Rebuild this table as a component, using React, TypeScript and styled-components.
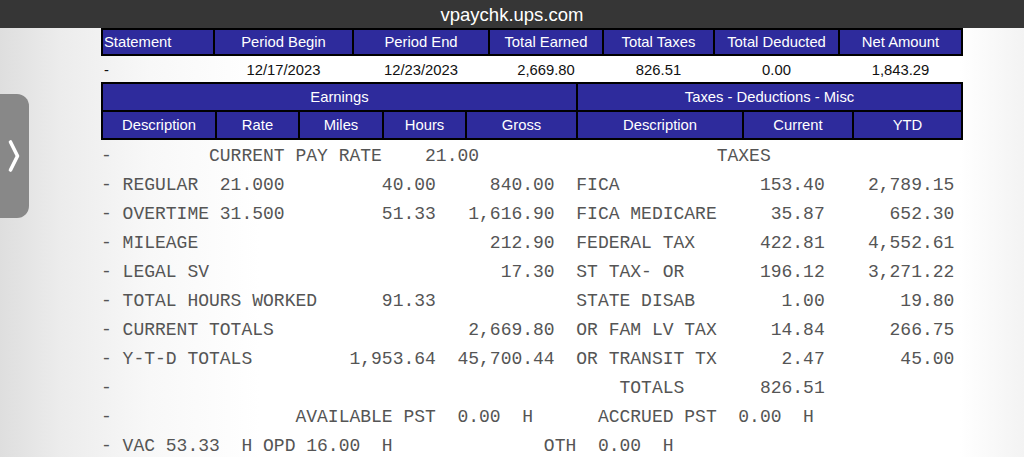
import styled, { createGlobalStyle } from 'styled-components';

const GlobalStyle = createGlobalStyle`
  html, body {
    margin: 0;
    padding: 0;
  }
  body {
    font-family: 'Liberation Sans', Arial, sans-serif;
    background: #fff;
  }
`;

const BLUE = '#2e2b9c';

type Align = 'left' | 'center';

const SUMMARY: { label: string; value: string; align: Align }[] = [
  { label: 'Statement', value: '-', align: 'left' },
  { label: 'Period Begin', value: '12/17/2023', align: 'center' },
  { label: 'Period End', value: '12/23/2023', align: 'center' },
  { label: 'Total Earned', value: '2,669.80', align: 'center' },
  { label: 'Total Taxes', value: '826.51', align: 'center' },
  { label: 'Total Deducted', value: '0.00', align: 'center' },
  { label: 'Net Amount', value: '1,843.29', align: 'center' },
];

const COLUMNS = ['Description', 'Rate', 'Miles', 'Hours', 'Gross', 'Description', 'Current', 'YTD'];

// the statement body is fixed-width text, so each line is built by column
type Piece = [number, string];
const at = (col: number, text: string): Piece => [col, text];
const right = (end: number, text: string): Piece => [end - text.length, text];
const compose = (...pieces: Piece[]) =>
  pieces.reduce((line, [col, text]) => line.padEnd(col, ' ') + text, '');

const LINES = [
  compose(at(0, '-'), at(10, 'CURRENT PAY RATE'), right(35, '21.00'), at(57, 'TAXES')),
  compose(at(0, '- REGULAR'), at(11, '21.000'), right(31, '40.00'), right(42, '840.00'), at(44, 'FICA'), right(67, '153.40'), right(79, '2,789.15')),
  compose(at(0, '- OVERTIME'), at(11, '31.500'), right(31, '51.33'), right(42, '1,616.90'), at(44, 'FICA MEDICARE'), right(67, '35.87'), right(79, '652.30')),
  compose(at(0, '- MILEAGE'), right(42, '212.90'), at(44, 'FEDERAL TAX'), right(67, '422.81'), right(79, '4,552.61')),
  compose(at(0, '- LEGAL SV'), right(42, '17.30'), at(44, 'ST TAX- OR'), right(67, '196.12'), right(79, '3,271.22')),
  compose(at(0, '- TOTAL HOURS WORKED'), right(31, '91.33'), at(44, 'STATE DISAB'), right(67, '1.00'), right(79, '19.80')),
  compose(at(0, '- CURRENT TOTALS'), right(42, '2,669.80'), at(44, 'OR FAM LV TAX'), right(67, '14.84'), right(79, '266.75')),
  compose(at(0, '- Y-T-D TOTALS'), right(31, '1,953.64'), right(42, '45,700.44'), at(44, 'OR TRANSIT TX'), right(67, '2.47'), right(79, '45.00')),
  compose(at(0, '-'), at(48, 'TOTALS'), right(67, '826.51')),
  compose(at(0, '-'), at(18, 'AVAILABLE PST  0.00  H'), at(46, 'ACCRUED PST  0.00  H')),
  compose(at(0, '- VAC 53.33  H OPD 16.00  H'), at(41, 'OTH  0.00  H')),
];

export default function App() {
  return (
    <>
      <GlobalStyle />
      <Page>
        <TopBar>vpaychk.ups.com</TopBar>
        <Sheet>
          <SummaryHead>
            {SUMMARY.map((item) => (
              <HeadCell key={item.label} $align={item.align}>
                {item.label}
              </HeadCell>
            ))}
          </SummaryHead>
          <SummaryValues>
            {SUMMARY.map((item) => (
              <ValueCell key={item.label} $align={item.align}>
                {item.value}
              </ValueCell>
            ))}
          </SummaryValues>
          <DetailHead>
            <HeadCell $span={5}>Earnings</HeadCell>
            <HeadCell $span={3}>Taxes - Deductions - Misc</HeadCell>
            {COLUMNS.map((label, i) => (
              <HeadCell key={i}>{label}</HeadCell>
            ))}
          </DetailHead>
          <Body>
            {LINES.map((line, i) => (
              <Line key={i}>{line}</Line>
            ))}
          </Body>
        </Sheet>
        <SideTab>
          <svg width="12" height="34" viewBox="0 0 12 34">
            <polyline
              points="2.5,3 9.5,17 2.5,31"
              fill="none"
              stroke="#fff"
              strokeWidth="3.6"
              strokeLinecap="round"
              strokeLinejoin="round"
            />
          </svg>
        </SideTab>
      </Page>
    </>
  );
}

const Page = styled.div`
  position: relative;
  width: 1024px;
  height: 457px;
  overflow: hidden;
  background: linear-gradient(90deg, #dedede 0px, #ececec 60px, #f8f8f8 150px, #fff 260px, #fff 960px, #f3f3f3 1024px);
`;

const TopBar = styled.div`
  height: 28px;
  background: #363636;
  color: #fff;
  display: flex;
  align-items: center;
  justify-content: center;
  font-size: 18.5px;
  padding-top: 1px;
  box-sizing: border-box;
`;

const Sheet = styled.div`
  margin-left: 101px;
  width: 862px;
`;

const SummaryHead = styled.div`
  display: grid;
  grid-template-columns: 110px 137px 134px 112px 109px 123px 121px;
  grid-auto-rows: 24px;
  gap: 2px;
  border: 2px solid #000;
  background: #000;
`;

const HeadCell = styled.div<{ $align?: Align; $span?: number }>`
  grid-column: span ${({ $span }) => $span ?? 1};
  background: ${BLUE};
  color: #fff;
  font-size: 14.8px;
  display: flex;
  align-items: center;
  justify-content: ${({ $align }) => ($align === 'left' ? 'flex-start' : 'center')};
  padding-left: ${({ $align }) => ($align === 'left' ? '1px' : '0')};
  white-space: nowrap;
`;

const SummaryValues = styled.div`
  display: grid;
  grid-template-columns: 110px 137px 134px 112px 109px 123px 121px;
  height: 26px;
  gap: 2px;
  padding: 1px 2px 0;
  box-sizing: border-box;
`;

const ValueCell = styled.div<{ $align: Align }>`
  color: #111;
  font-size: 14.8px;
  display: flex;
  align-items: center;
  justify-content: ${({ $align }) => ($align === 'left' ? 'flex-start' : 'center')};
  padding-left: ${({ $align }) => ($align === 'left' ? '1px' : '0')};
`;

const DetailHead = styled.div`
  display: grid;
  grid-template-columns: 112px 81px 82px 81px 109px 164px 108px 107px;
  grid-auto-rows: 26px;
  gap: 2px;
  border: 2px solid #000;
  background: #000;
`;

const Body = styled.div`
  display: flex;
  flex-direction: column;
  padding-top: 2px;
`;

const Line = styled.div`
  height: 29px;
  line-height: 29px;
  white-space: pre;
  font-family: 'Liberation Mono', 'Courier New', monospace;
  font-size: 18px;
  color: #555;
`;

const SideTab = styled.div`
  position: absolute;
  left: 0;
  top: 94px;
  width: 29px;
  height: 124px;
  background: #888;
  border-radius: 0 12px 12px 0;
  display: flex;
  align-items: center;
  justify-content: center;
  padding-right: 2px;
  box-sizing: border-box;
`;
